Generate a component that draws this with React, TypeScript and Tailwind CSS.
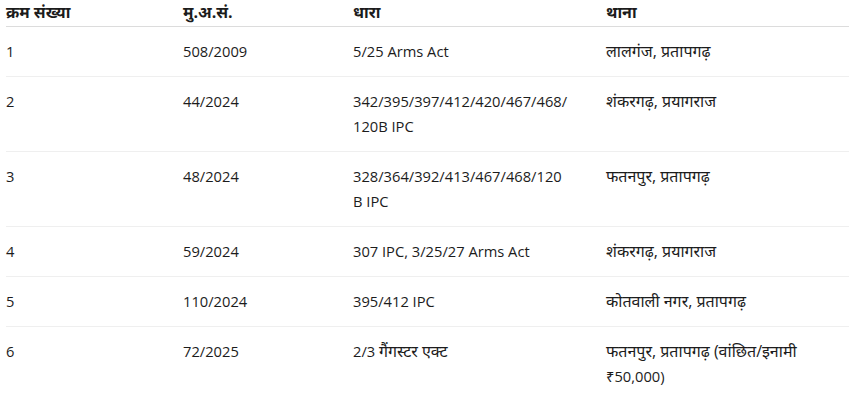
import React from 'react';

type Row = {
  sn: string;
  case: string;
  section: React.ReactNode;
  station: React.ReactNode;
};

// Devanagari runs in the fallback font come out narrow next to Open Sans, so bump them
function Hi({ children }: { children: React.ReactNode }) {
  return <span className="text-[16px] leading-none">{children}</span>;
}

const rows: Row[] = [
  { sn: '1', case: '508/2009', section: '5/25 Arms Act', station: <Hi>लालगंज, प्रतापगढ़</Hi> },
  {
    sn: '2',
    case: '44/2024',
    section: (
      <>
        342/395/397/412/420/467/468/
        <br />
        120B IPC
      </>
    ),
    station: <Hi>शंकरगढ़, प्रयागराज</Hi>,
  },
  {
    sn: '3',
    case: '48/2024',
    section: (
      <>
        328/364/392/413/467/468/120
        <br />B IPC
      </>
    ),
    station: <Hi>फतनपुर, प्रतापगढ़</Hi>,
  },
  { sn: '4', case: '59/2024', section: '307 IPC, 3/25/27 Arms Act', station: <Hi>शंकरगढ़, प्रयागराज</Hi> },
  { sn: '5', case: '110/2024', section: '395/412 IPC', station: <Hi>कोतवाली नगर, प्रतापगढ़</Hi> },
  {
    sn: '6',
    case: '72/2025',
    section: (
      <>
        2/3 <Hi>गैंगस्टर एक्ट</Hi>
      </>
    ),
    station: (
      <>
        <Hi>फतनपुर, प्रतापगढ़ (वांछित/इनामी</Hi>
        <br />
        ₹50,000)
      </>
    ),
  },
];

export default function App() {
  return (
    <div className="w-[849px] h-[404px] overflow-hidden bg-white pl-[6px] text-[#1c1c1c] font-['Open_Sans','Noto_Sans',sans-serif] text-[14.7px] leading-[25px]">
      <table className="w-[843px] table-fixed border-collapse text-left">
        <colgroup>
          <col className="w-[177px]" />
          <col className="w-[170px]" />
          <col className="w-[253px]" />
          <col className="w-[243px]" />
        </colgroup>
        <thead>
          <tr className="border-b border-[#dcdcdc]">
            <th className="p-0 pb-[1px] font-bold align-top"><Hi>क्रम संख्या</Hi></th>
            <th className="p-0 pb-[1px] font-bold align-top"><Hi>मु.अ.सं.</Hi></th>
            <th className="p-0 pb-[1px] font-bold align-top"><Hi>धारा</Hi></th>
            <th className="p-0 pb-[1px] font-bold align-top"><Hi>थाना</Hi></th>
          </tr>
        </thead>
        <tbody>
          {rows.map((r, i) => (
            <tr key={r.sn} className={i < rows.length - 1 ? 'border-b border-[#efefef]' : ''}>
              <td className="py-3 align-top">{r.sn}</td>
              <td className="py-3 align-top">{r.case}</td>
              <td className="py-3 pr-4 align-top">{r.section}</td>
              <td className="py-3 align-top">{r.station}</td>
            </tr>
          ))}
        </tbody>
      </table>
    </div>
  );
}
